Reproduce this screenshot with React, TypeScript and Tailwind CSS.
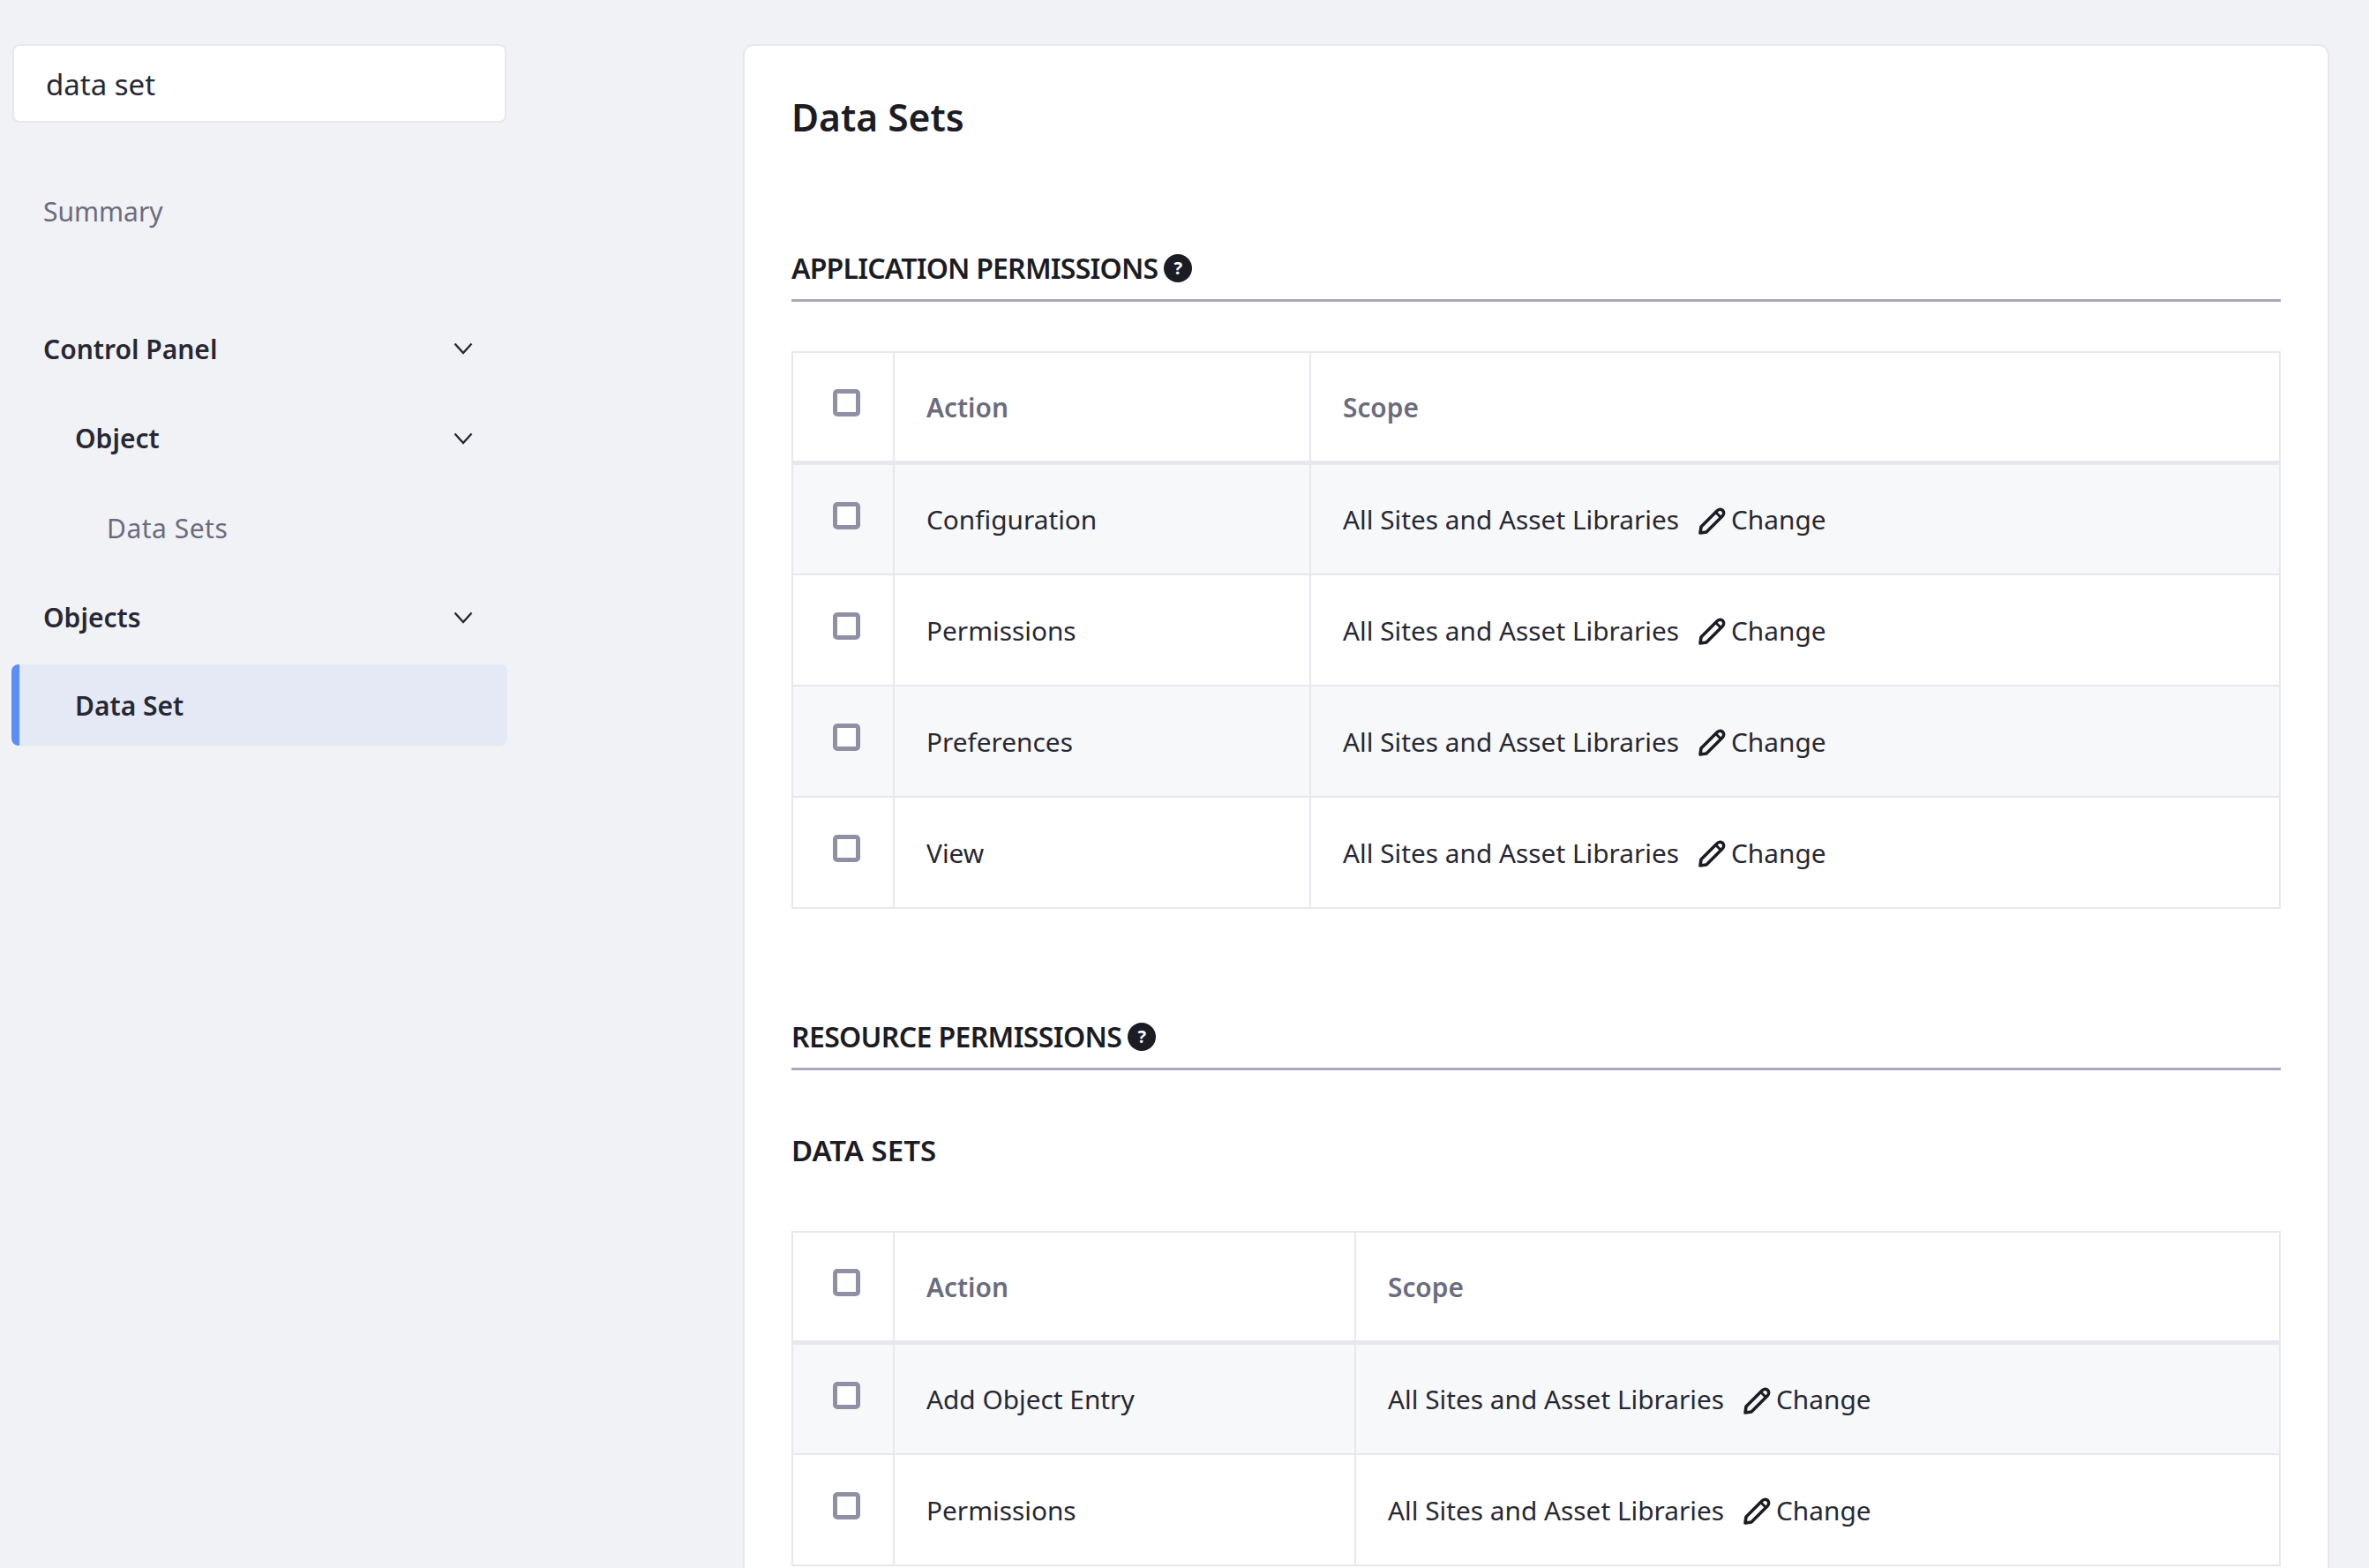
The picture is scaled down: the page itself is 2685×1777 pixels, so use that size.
import React from 'react';

const FONT = "font-['Noto_Sans',sans-serif]";

const Chevron = () => (
  <svg width="22" height="14" viewBox="0 0 22 14" fill="none" stroke="#272833" strokeWidth="2.4">
    <path d="M1.500 1.500 11 12l9.500-10.500" />
  </svg>
);

const Pencil = () => (
  <svg width="32" height="32" viewBox="0 0 32 32" fill="none" stroke="#1c1c24" strokeWidth="3.6" strokeLinejoin="round" className="shrink-0">
    <path d="M2 30 3 23 21 5c2.200-2.200 5-2.200 6.500-.5s1.700 4.300-.5 6.500L9 29z" />
    <path d="M19.500 6.500l6 6" strokeWidth="3" />
  </svg>
);

const Help = () => (
  <span className="ml-[7px] flex h-8 w-8 items-center justify-center rounded-full bg-[#1c1c24] text-[20px] font-bold tracking-normal text-white">?</span>
);

const Checkbox = () => (
  <div className="mx-auto mb-2 h-[31px] w-[31px] rounded-[5px] border-[5px] border-[#8f90a3] bg-white" />
);

const SectionTitle = ({ title, tracking }: { title: string; tracking: string }) => (
  <div className={`flex items-center border-b-[3px] border-[#a7a9bc] pb-[11px] text-[32px] font-semibold ${tracking} text-[#1c1c24]`}>
    {title}
    <Help />
  </div>
);

const PermissionTable = ({ actions, actionWidth }: { actions: string[]; actionWidth: string }) => (
  <table className="w-full table-fixed border-collapse text-[29.8px] text-[#272833]">
    <thead>
      <tr className="h-[126px] border-b-[5px] border-[#e7e7ed]">
        <th className="w-[115px] border-2 border-b-0 border-[#e7e7ed] pl-2"><Checkbox /></th>
        <th className={`${actionWidth} border-2 border-b-0 border-[#e7e7ed] pl-9 pt-[3px] text-left font-semibold text-[#6b6c7e]`}>Action</th>
        <th className="border-2 border-b-0 border-[#e7e7ed] pl-9 pt-[3px] text-left font-semibold text-[#6b6c7e]">Scope</th>
      </tr>
    </thead>
    <tbody>
      {actions.map((action, i) => (
        <tr key={action} className={`h-[126px] ${i % 2 === 0 ? 'bg-[#f7f8f9]' : 'bg-white'}`}>
          <td className="border-2 border-[#e7e7ed] pl-2"><Checkbox /></td>
          <td className="border-2 border-[#e7e7ed] pl-9 pt-[3px]">{action}</td>
          <td className="border-2 border-[#e7e7ed] pl-9 pt-[3px]">
            <div className="flex items-center">
              All Sites and Asset Libraries
              <span className="ml-[22px] mr-[5px]"><Pencil /></span>
              Change
            </div>
          </td>
        </tr>
      ))}
    </tbody>
  </table>
);

const NavRow = ({ label, indent, bold, chevron, extra = '' }: { label: string; indent: string; bold?: boolean; chevron?: boolean; extra?: string }) => (
  <div className={`flex h-[92px] items-center justify-between ${indent} pr-[38px] text-[30px] ${extra} ${bold ? 'font-semibold text-[#272833]' : 'text-[#6b6c7e]'}`}>
    {label}
    {chevron && <Chevron />}
  </div>
);

export default function App() {
  return (
    <div className={`flex h-[1777px] overflow-hidden bg-[#f1f2f6] ${FONT}`}>
      <aside className="ml-[14px] w-[560px] shrink-0 pt-[50px]">
        <div className="flex h-[89px] items-center rounded-lg border-2 border-[#e7e7ed] bg-white pl-9 pt-[3px] text-[33px] text-[#272833]">data set</div>
        <div className="mt-[54px] space-y-[9.5px]">
          <NavRow label="Summary" indent="pl-[35px]" />
          <div className="h-[45px]" />
          <NavRow label="Control Panel" indent="pl-[35px]" bold chevron />
          <NavRow label="Object" indent="pl-[71px]" bold chevron />
          <NavRow label="Data Sets" indent="pl-[107px]" extra="tracking-[0.5px]" />
          <NavRow label="Objects" indent="pl-[35px]" bold chevron />
          <div className="-mx-px -mt-[2px] flex h-[92px] items-center rounded-lg border-l-[9px] border-[#5a8ffb] bg-[#e4e9f5] pl-[63px] text-[30px] font-semibold text-[#272833]">Data Set</div>
        </div>
      </aside>
      <main className="ml-[268px] h-[1900px] w-[1798px] shrink-0 translate-y-[50px] rounded-xl border-2 border-[#e7e7ed] bg-white px-[53px] pt-[53px] text-[#1c1c24]">
        <h1 className="text-[42.5px] font-semibold leading-[56px]">Data Sets</h1>
        <div className="mt-[119px]"><SectionTitle title="APPLICATION PERMISSIONS" tracking="tracking-[-0.8px]" /></div>
        <div className="mt-[55.5px]">
          <PermissionTable actionWidth="w-[472px]" actions={['Configuration', 'Permissions', 'Preferences', 'View']} />
        </div>
        <div className="mt-[121.5px]"><SectionTitle title="RESOURCE PERMISSIONS" tracking="tracking-[-0.65px]" /></div>
        <div className="mt-[66px] text-[33px] font-semibold">DATA SETS</div>
        <div className="mt-[66px]">
          <PermissionTable actionWidth="w-[523px]" actions={['Add Object Entry', 'Permissions']} />
        </div>
      </main>
    </div>
  );
}
